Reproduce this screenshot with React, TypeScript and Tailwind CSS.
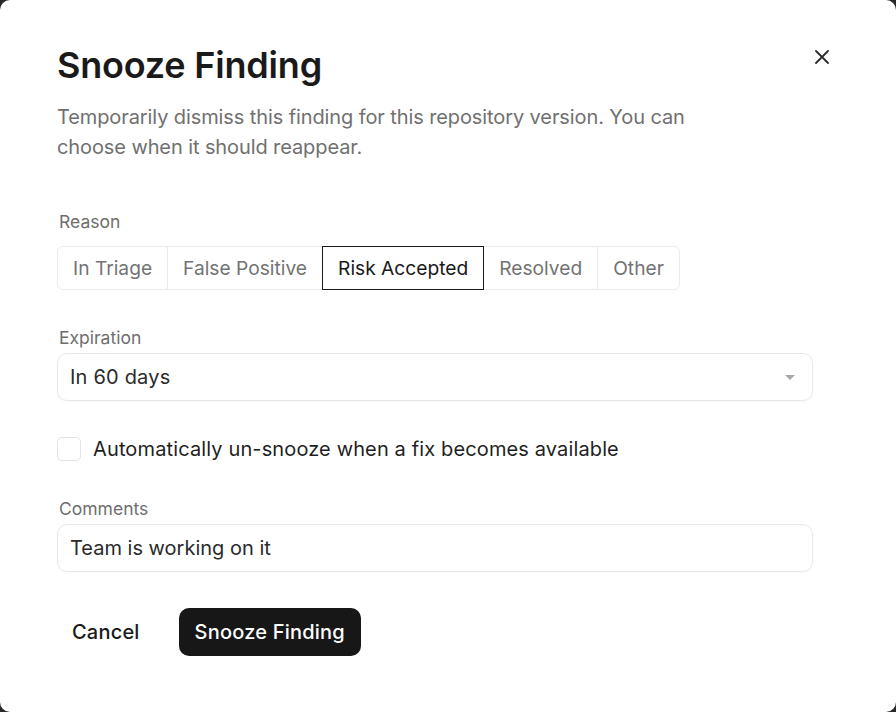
import { useState } from 'react';

const reasons = ['In Triage', 'False Positive', 'Risk Accepted', 'Resolved', 'Other'];

const App = () => {
  const [reason, setReason] = useState('Risk Accepted');
  const [autoUnsnooze, setAutoUnsnooze] = useState(false);
  const [comment, setComment] = useState('Team is working on it');

  return (
    <div className="min-h-screen bg-[#2a2a2a] font-['Inter','Liberation_Sans',sans-serif]">
      <div className="relative h-[712px] w-[896px] rounded-[10px] bg-white pl-[57px] pt-[45px]">
        {/* Close */}
        <button className="absolute right-[67px] top-[50px] text-[#2b2b2b]" aria-label="Close">
          <svg width="14" height="14" viewBox="0 0 14 14" fill="none" stroke="currentColor" strokeWidth="1.8" strokeLinecap="round">
            <path d="M1 1l12 12M13 1L1 13" />
          </svg>
        </button>

        {/* Header */}
        <h2 className="text-[36px] font-semibold leading-[40px] tracking-[-0.2px] text-[#1a1a1a]">Snooze Finding</h2>
        <p className="mt-[17px] w-[660px] text-[20px] leading-[30px] tracking-[-0.1px] text-[#707070]">
          Temporarily dismiss this finding for this repository version. You can choose when it should reappear.
        </p>

        <div className="w-[756px]">
          {/* Reason */}
          <div className="mt-[48px]">
            <div className="mb-[12px] pl-[2px] text-[17.5px] leading-[24px] text-[#6e6e6e]">Reason</div>
            <div className="flex h-[44px] w-fit rounded-[6px] border border-[#ebebeb]">
              {reasons.map((r, i) => (
                <button
                  key={r}
                  onClick={() => setReason(r)}
                  className={
                    reason === r
                      ? '-my-px border border-[#1a1a1a] px-[15px] text-[19.2px] text-[#1a1a1a]'
                      : i > 0 && reasons[i - 1] !== reason
                        ? 'border-l border-[#ebebeb] px-[15px] text-[19.2px] text-[#737373]'
                        : 'px-[15px] text-[19.2px] text-[#737373]'
                  }
                >
                  {r}
                </button>
              ))}
            </div>
          </div>

          {/* Expiration */}
          <div className="mt-[36px]">
            <div className="mb-[3px] pl-[2px] text-[17.5px] leading-[24px] text-[#6e6e6e]">Expiration</div>
            <div className="flex h-[48px] items-center justify-between rounded-[10px] border border-[#e8e8e8] pl-[12px] pr-[17px] shadow-[0_1px_2px_rgba(0,0,0,0.03)]">
              <span className="text-[20px] tracking-[0.2px] text-[#2a2a2a]">In 60 days</span>
              <svg width="10" height="5" viewBox="0 0 10 5" className="text-[#a8a8a8]">
                <path d="M0 0h10L5 5z" fill="currentColor" />
              </svg>
            </div>
          </div>

          {/* Auto un-snooze */}
          <label className="mt-[36px] flex items-center gap-[12px]">
            <input
              type="checkbox"
              checked={autoUnsnooze}
              onChange={(e) => setAutoUnsnooze(e.target.checked)}
              className="h-[24px] w-[24px] appearance-none rounded-[5px] border border-[#e3e3e3] bg-white"
            />
            <span className="text-[20px] leading-[24px] tracking-[0.13px] text-[#1f1f1f]">
              Automatically un-snooze when a fix becomes available
            </span>
          </label>

          {/* Comments */}
          <div className="mt-[36px]">
            <div className="mb-[3px] pl-[2px] text-[17.5px] leading-[24px] text-[#6e6e6e]">Comments</div>
            <input
              value={comment}
              onChange={(e) => setComment(e.target.value)}
              className="h-[48px] w-full rounded-[10px] border border-[#e8e8e8] px-[12px] text-[20px] text-[#2a2a2a] outline-none shadow-[0_1px_2px_rgba(0,0,0,0.03)]"
            />
          </div>

          {/* Actions */}
          <div className="mt-[36px] flex items-center gap-[24px]">
            <button className="h-[48px] rounded-[10px] px-[15px] text-[20px] font-medium tracking-[0.2px] text-[#1a1a1a]">Cancel</button>
            <button className="h-[48px] rounded-[10px] bg-[#171717] px-[16px] text-[20px] font-medium tracking-[0.2px] text-white">
              Snooze Finding
            </button>
          </div>
        </div>
      </div>
    </div>
  );
};

export default App;
